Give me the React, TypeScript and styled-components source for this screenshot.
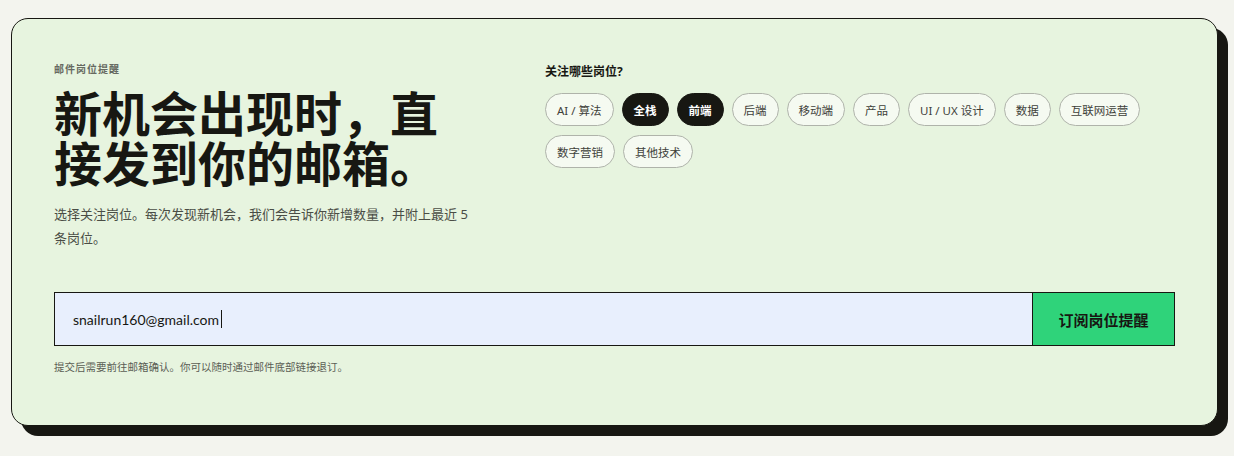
import React, { useState } from "react";
import styled, { createGlobalStyle } from "styled-components";

const GlobalStyle = createGlobalStyle`
  html, body {
    margin: 0;
    background: #f3f4ee;
  }
  body {
    font-family: "Noto Sans", "Noto Sans CJK SC", sans-serif;
    color: #171712;
  }
`;

const TOPICS = [
  "AI / 算法",
  "全栈",
  "前端",
  "后端",
  "移动端",
  "产品",
  "UI / UX 设计",
  "数据",
  "互联网运营",
  "数字营销",
  "其他技术",
];

function App() {
  const [picked, setPicked] = useState<string[]>(["全栈", "前端"]);
  const [email, setEmail] = useState("snailrun160@gmail.com");

  const toggle = (t: string) =>
    setPicked((p) => (p.includes(t) ? p.filter((x) => x !== t) : [...p, t]));

  return (
    <Page>
      <GlobalStyle />
      <Card>
        <Top>
          <Intro>
            <Eyebrow>邮件岗位提醒</Eyebrow>
            <Heading>新机会出现时，直接发到你的邮箱。</Heading>
            <Lead>选择关注岗位。每次发现新机会，我们会告诉你新增数量，并附上最近 5 条岗位。</Lead>
          </Intro>
          <Picker>
            <PickerTitle>关注哪些岗位?</PickerTitle>
            <Chips>
              {TOPICS.map((t) => (
                <Chip key={t} type="button" $on={picked.includes(t)} onClick={() => toggle(t)}>
                  {t}
                </Chip>
              ))}
            </Chips>
          </Picker>
        </Top>
        <Form onSubmit={(e) => e.preventDefault()}>
          <EmailWrap>
            <EmailInput value={email} onChange={(e) => setEmail(e.target.value)} />
            <Caret />
          </EmailWrap>
          <Submit type="submit">订阅岗位提醒</Submit>
        </Form>
        <Note>提交后需要前往邮箱确认。你可以随时通过邮件底部链接退订。</Note>
      </Card>
    </Page>
  );
}

export default App;

const Page = styled.div`
  padding: 18px 16px 20px 11px;
`;

const Card = styled.div`
  background: #e7f4df;
  border: 1px solid #171712;
  border-radius: 17px;
  box-shadow: 10px 10px 0 #171712;
  padding: 43px 42px 52px 42px;
  height: 408px;
  box-sizing: border-box;
`;

const Top = styled.div`
  display: grid;
  grid-template-columns: 420px 1fr;
  column-gap: 71px;
`;

const Intro = styled.div`
  display: flex;
  flex-direction: column;
`;

const Eyebrow = styled.div`
  font-size: 10px;
  font-weight: 700;
  letter-spacing: 1px;
  color: #666961;
  line-height: 14px;
`;

const Heading = styled.h1`
  margin: 10px 0 0;
  font-family: "Noto Sans CJK SC", sans-serif;
  font-size: 48px;
  font-weight: 700;
  line-height: 50px;
  letter-spacing: 0;
  width: 400px;
  color: #171712;
`;

const Lead = styled.p`
  margin: 16px 0 0;
  font-size: 13px;
  line-height: 24px;
  color: #4a4d45;
`;

const Picker = styled.div`
  display: flex;
  flex-direction: column;
`;

const PickerTitle = styled.div`
  font-size: 12px;
  font-weight: 700;
  line-height: 16px;
  margin-top: 2px;
  color: #171712;
`;

const Chips = styled.div`
  display: flex;
  flex-wrap: wrap;
  gap: 9px 8px;
  margin-top: 13px;
`;

const Chip = styled.button<{ $on: boolean }>`
  height: 33px;
  padding: 0 11px;
  border-radius: 17px;
  font-family: "Noto Sans", "Noto Sans CJK SC", sans-serif;
  font-size: 11.5px;
  font-weight: ${(p) => (p.$on ? 700 : 400)};
  border: 1px solid ${(p) => (p.$on ? "#171712" : "#afb3aa")};
  background: ${(p) => (p.$on ? "#171712" : "#f5faf1")};
  color: ${(p) => (p.$on ? "#ffffff" : "#3e413a")};
  cursor: pointer;
`;

const Form = styled.form`
  display: flex;
  margin-top: 42px;
  height: 54px;
  box-sizing: border-box;
  border: 1px solid #171712;
`;

const EmailWrap = styled.div`
  flex: 1;
  display: flex;
  align-items: center;
  background: #e8effd;
  padding-left: 18px;
`;

const EmailInput = styled.input`
  border: none;
  outline: none;
  background: transparent;
  font-family: "Lato", "Noto Sans", sans-serif;
  font-size: 14px;
  color: #171712;
  padding: 0;
  width: 148px;
`;

const Caret = styled.span`
  width: 1px;
  height: 18px;
  background: #171712;
`;

const Submit = styled.button`
  width: 142px;
  border: none;
  border-left: 1px solid #171712;
  background: #2fd37a;
  font-family: "Noto Sans CJK SC", sans-serif;
  font-size: 15px;
  font-weight: 700;
  color: #171712;
  cursor: pointer;
`;

const Note = styled.div`
  margin-top: 14px;
  font-size: 10.5px;
  color: #5b5e55;
  line-height: 14px;
`;
